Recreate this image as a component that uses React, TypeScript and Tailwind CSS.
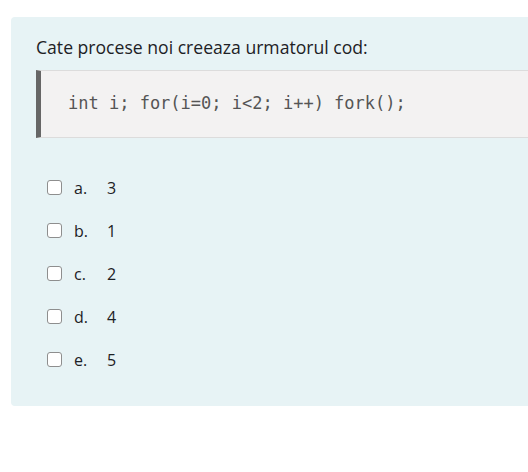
const options = [
  { letter: 'a.', value: '3' },
  { letter: 'b.', value: '1' },
  { letter: 'c.', value: '2' },
  { letter: 'd.', value: '4' },
  { letter: 'e.', value: '5' },
]

export default function App() {
  return (
    <div className="min-h-screen bg-white pt-[17px] pl-[11px] overflow-hidden">
      <div
        className="w-[540px] h-[389px] bg-[#e7f3f5] rounded-[4px] pl-[25px] pt-[18px] text-[#1d2125]"
        style={{ fontFamily: '"Open Sans", "Noto Sans", sans-serif' }}
      >
        {/* Question */}
        <p className="text-[17.6px] leading-[24px]">Cate procese noi creeaza urmatorul cod:</p>

        {/* Code block */}
        <div className="mt-[11px] h-[68px] flex items-center bg-[#f3f2f2] border-y border-[#dcdcdc] border-l-[5px] border-l-[#666666] pl-[27px]">
          <code
            className="text-[17px] text-[#555] whitespace-pre"
            style={{ fontFamily: '"DejaVu Sans Mono", "Liberation Mono", monospace' }}
          >
            int i; for(i=0; i&lt;2; i++) fork();
          </code>
        </div>

        {/* Answers */}
        <div className="mt-[38px] pl-[11px] flex flex-col gap-[20px]">
          {options.map((o) => (
            <label key={o.letter} className="flex items-center h-[23px] text-[16px]">
              <span className="w-[15px] h-[15px] rounded-[3px] border border-[#8e8e8e] bg-white shrink-0" />
              <span className="ml-[12px] w-[33px]">{o.letter}</span>
              <span>{o.value}</span>
            </label>
          ))}
        </div>
      </div>
    </div>
  )
}
